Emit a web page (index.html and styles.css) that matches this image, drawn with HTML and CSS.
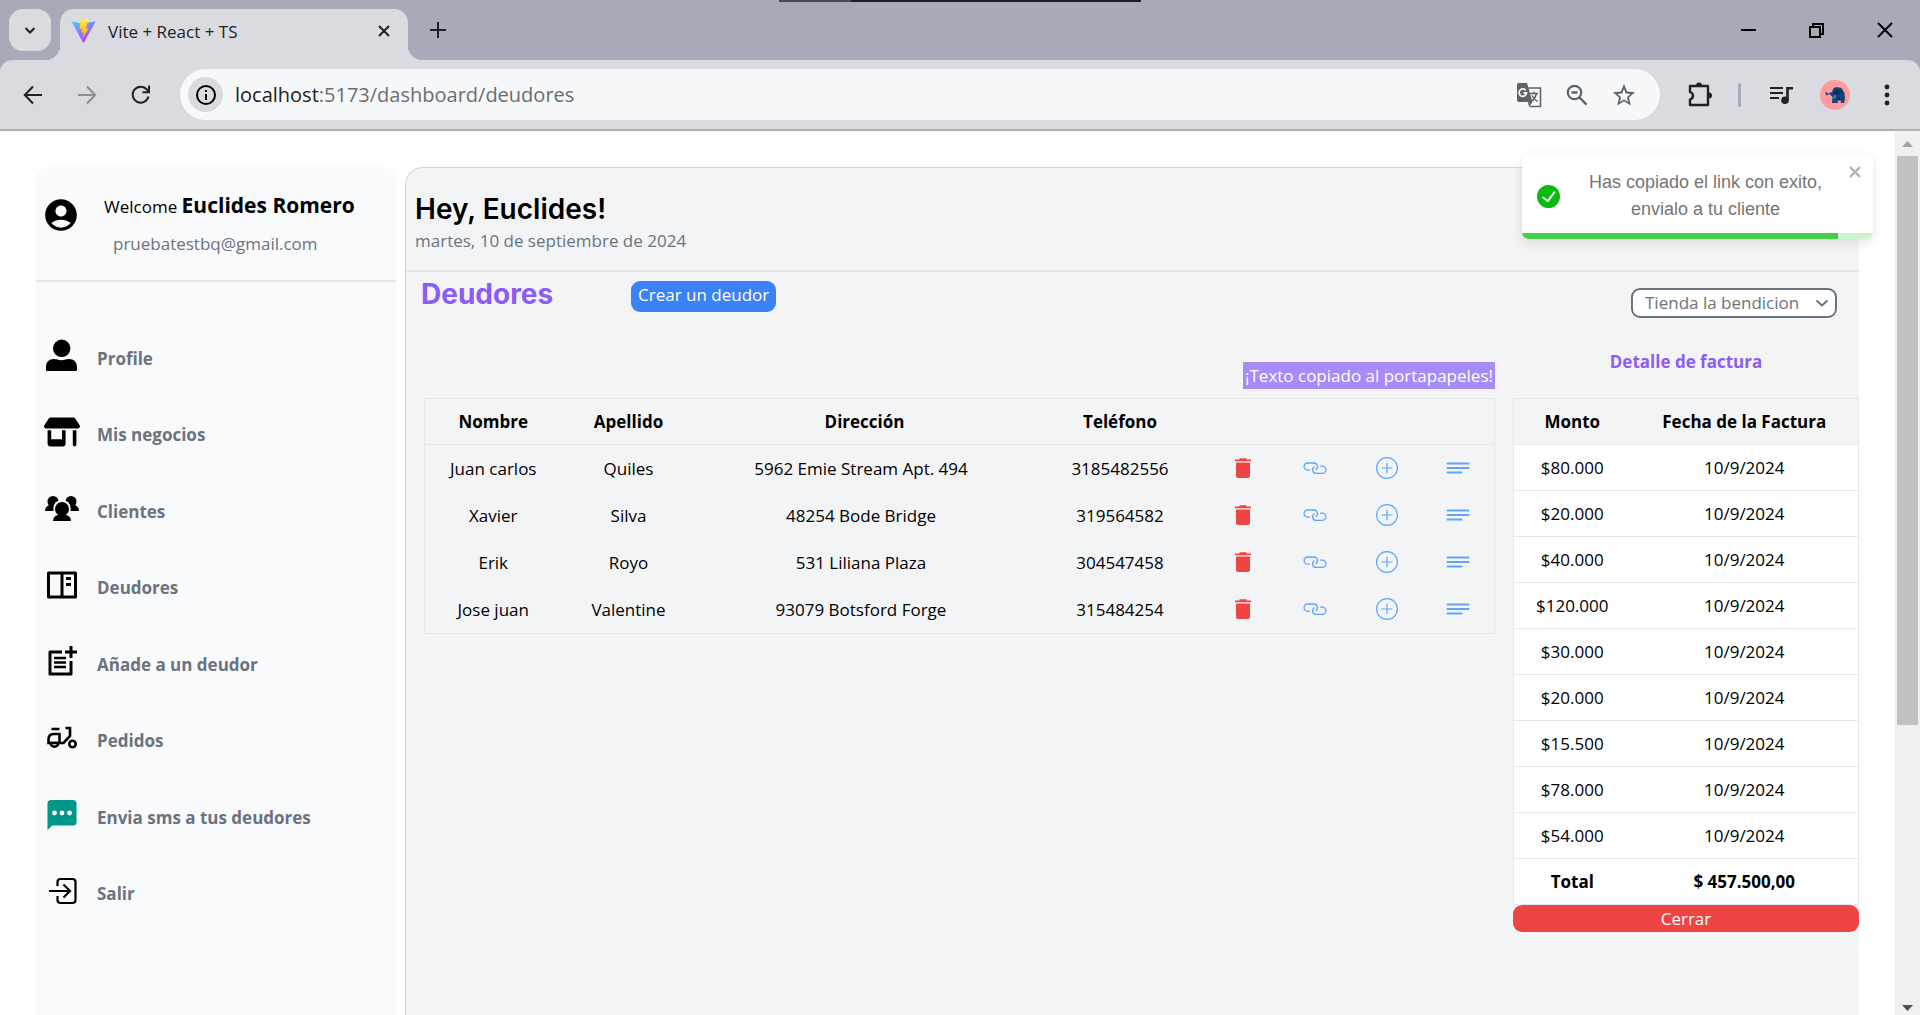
FILE: index.html
```html
<!DOCTYPE html>
<html lang="es">
<head>
<meta charset="utf-8">
<title>Vite + React + TS</title>
<link rel="stylesheet" href="styles.css">
</head>
<body>
<svg class="defs" aria-hidden="true">
  <symbol id="trash" viewBox="0 0 24 24"><path d="M4 3.500h16v1.700H4zM8.500 2.300h7v1.500h-7zM5 6.500h14V20a2 2 0 0 1-2 2H7a2 2 0 0 1-2-2z"/></symbol>
  <symbol id="link" viewBox="0 0 24 24"><path fill="none" stroke="currentColor" stroke-width="1.300" stroke-linecap="round" d="M6.500 14.200H4.700a3.600 3.600 0 0 1 0-7.200h6a3.600 3.600 0 0 1 2.300 6.500M17.500 10.200h1.800a3.600 3.600 0 0 1 0 7.200h-6a3.600 3.600 0 0 1-2.300-6.500"/></symbol>
  <symbol id="plus" viewBox="0 0 24 24"><path fill="none" stroke="currentColor" stroke-width="1.200" stroke-linecap="round" d="M12 1.600a10.400 10.400 0 1 0 0 20.800a10.400 10.400 0 1 0 0-20.800M12 7v10M7 12h10"/></symbol>
  <symbol id="lines" viewBox="0 0 24 24"><path fill="none" stroke="currentColor" stroke-width="2" stroke-linecap="round" d="M1.500 7.500h21M1.500 12h21M1.500 16.500h14"/></symbol>
</svg>

<header class="browser">
  <div class="tabs">
    <button class="tab-search" aria-label="Buscar pestañas"><svg width="14" height="14" viewBox="0 0 14 14"><path class="ln" d="M2.500 5L7 9.500 11.500 5"/></svg></button>
    <div class="tab">
      <svg class="tab-logo" width="25" height="25" viewBox="0 0 25 25">
        <defs>
          <linearGradient id="va" x1="0" y1="0" x2=".6" y2="1"><stop offset="0" stop-color="#41d1ff"/><stop offset="1" stop-color="#bd34fe"/></linearGradient>
          <linearGradient id="vb" x1="0" y1="0" x2="0" y2="1"><stop offset="0" stop-color="#ffea83"/><stop offset=".2" stop-color="#ffdd35"/><stop offset="1" stop-color="#ffa800"/></linearGradient>
        </defs>
        <path fill="url(#va)" d="M.5 3.500L12 5.500l12.500-2L13 24.500h-1z"/>
        <path fill="url(#vb)" d="M17.500.5L9.200 2 8.600 11l2.500-.4-.7 4.200 2-.5-1 6.500 6.200-10.400-2.600.4z"/>
      </svg>
      <span class="tab-title">Vite + React + TS</span>
      <button class="plain" aria-label="Cerrar pestaña"><svg width="14" height="14" viewBox="0 0 14 14"><path class="ln" d="M2 2l10 10M12 2L2 12"/></svg></button>
    </div>
    <button class="plain new-tab" aria-label="Nueva pestaña"><svg width="16" height="16" viewBox="0 0 16 16"><path class="ln" d="M8 0v16M0 8h16"/></svg></button>
    <span class="top-line"></span>
    <div class="window-buttons">
      <button class="plain" aria-label="Minimizar"><svg width="16" height="16" viewBox="0 0 16 16"><path class="thin" d="M0 8h15"/></svg></button>
      <button class="plain" aria-label="Restaurar"><svg width="16" height="16" viewBox="0 0 16 16"><path class="thin" d="M1 5h10v10H1zM4 5V2h10v10h-3"/></svg></button>
      <button class="plain" aria-label="Cerrar"><svg width="16" height="16" viewBox="0 0 16 16"><path class="thin" d="M1 1l14 14M15 1L1 15"/></svg></button>
    </div>
  </div>
  <div class="toolbar">
    <button class="plain" aria-label="Atrás"><svg width="20" height="20" viewBox="0 0 20 20"><path class="ln" d="M19 10H2M10 1.500L1.800 10l8.200 8.500"/></svg></button>
    <button class="plain dim" aria-label="Adelante"><svg width="20" height="20" viewBox="0 0 20 20"><path class="ln" d="M1 10h17M10 1.500l8.200 8.500-8.200 8.500"/></svg></button>
    <button class="plain" aria-label="Recargar"><svg width="20" height="20" viewBox="0 0 20 20"><path class="ln" d="M17.500 11.500A8 8 0 1 1 16 4.700L18 7"/><path class="ln" d="M18 .5V7.200h-6.500"/></svg></button>
    <div class="address">
      <span class="info"><svg width="22" height="22" viewBox="0 0 22 22"><circle class="ln" cx="11" cy="11" r="9"/><path class="ln" d="M11 10v6M11 6v2"/></svg></span>
      <span class="url">localhost<span class="url-rest">:5173/dashboard/deudores</span></span>
      <button class="plain grey" aria-label="Traducir"><svg width="26" height="26" viewBox="0 0 26 26"><path fill="none" stroke="currentColor" stroke-width="1.600" stroke-linejoin="round" d="M11 6h13.500v18.500H14"/><path fill="currentColor" d="M2.500 1h8.500l5.500 19H3a2 2 0 0 1-2-2V2.500A1.500 1.500 0 0 1 2.500 1zM12 20h4.500L13 25z"/><path fill="none" stroke="#f6f8fa" stroke-width="1.800" d="M9.700 8.300A3.700 3.700 0 1 0 10.500 11H7.500"/><path fill="none" stroke="currentColor" stroke-width="1.500" d="M14 11.500h8M18 9.500v2M20.500 11.500c-1 4-2.500 6-4.500 7.500M16 13.500c1.500 3 3 4.500 5.500 6"/></svg></button>
      <button class="plain grey" aria-label="Zoom"><svg width="22" height="22" viewBox="0 0 22 22"><circle cx="8.500" cy="8.500" r="6.700" fill="none" stroke="currentColor" stroke-width="2.200"/><path fill="none" stroke="currentColor" stroke-width="2.400" d="M13.500 13.500l7 7.200M5.500 8.500h6"/></svg></button>
      <button class="plain grey" aria-label="Marcador"><svg width="24" height="24" viewBox="0 0 24 24"><path fill="currentColor" d="M23 9.240l-7.910-.68L12 1 8.910 8.570 1 9.240l6 5.240L5.180 22.500 12 18.200l6.820 4.300L17 14.480zM12 16.400l-4.100 2.700 1.100-5-3.500-3 4.700-.5L12 6l1.800 4.600 4.700.5-3.500 3 1.100 5z"/></svg></button>
    </div>
    <button class="plain" aria-label="Extensiones"><svg width="26" height="26" viewBox="0 0 26 26"><path fill="none" stroke="currentColor" stroke-width="2.400" stroke-linejoin="round" d="M3 4h18v19H3v-5.500c4-1.500 4-6 0-7.500z"/><path fill="currentColor" d="M9 3.500a3 3 0 0 1 6 0zM22 10.500a3 3 0 0 1 0 6z"/></svg></button>
    <span class="divider"></span>
    <button class="plain" aria-label="Multimedia"><svg width="24" height="20" viewBox="0 0 24 20"><path class="ln" d="M1 3h13M1 8h13M1 13h9"/><path fill="none" stroke="currentColor" stroke-width="2.600" d="M18.500 15V3.300H24"/><circle cx="16" cy="15.300" r="3.800" fill="currentColor"/></svg></button>
    <button class="plain avatar" aria-label="Perfil"><svg width="30" height="30" viewBox="0 0 30 30"><circle cx="15" cy="15" r="15" fill="#ff9b9f"/><path fill="#15457e" d="M5.500 11.500l2.500 2 4-1.500 1.500-4 3-1 5 1 3 5 .5 6-1 4h-3l-.5-3h-3l.5 3h-6l.5-6-3-3-3.500 1.500z"/><path fill="#0a2c58" d="M13 13.500l4.500-4.500 4.500 2-3 4zM16 18l3.500-1 1 3.500H17z"/><path fill="#2f74b0" d="M12.500 18l2-3.500 2 1.500-1 3z"/></svg></button>
    <button class="plain" aria-label="Menú"><svg width="6" height="22" viewBox="0 0 6 22"><g fill="currentColor"><circle cx="3" cy="3" r="2.400"/><circle cx="3" cy="11" r="2.400"/><circle cx="3" cy="19" r="2.400"/></g></svg></button>
  </div>
</header>

<div class="viewport">
  <div class="page">
    <aside class="sidebar">
      <div class="user">
        <svg width="38" height="38" viewBox="0 0 24 24"><path d="M12 2C6.480 2 2 6.480 2 12s4.480 10 10 10 10-4.480 10-10S17.520 2 12 2zm0 4c1.930 0 3.500 1.570 3.500 3.500S13.930 13 12 13s-3.500-1.570-3.500-3.500S10.070 6 12 6zm0 14c-2.030 0-4.430-.82-6.140-2.880a9.947 9.947 0 0 1 12.280 0C16.430 19.180 14.030 20 12 20z"/></svg>
        <div class="user-text">
          <p>Welcome <strong>Euclides Romero</strong></p>
          <p class="email">pruebatestbq@gmail.com</p>
        </div>
      </div>
      <nav class="nav">
        <a href="#"><svg viewBox="0 0 36 36"><circle cx="17.700" cy="11.300" r="8.700"/><path d="M2 33v-3c0-5 3-8 8-8 3 0 4 1.200 7.500 1.200S22 22 25 22c5 0 8 3 8 8v3q0 1-1 1H3q-1 0-1-1z"/></svg>Profile</a>
        <a href="#"><svg viewBox="0 -64 640 640"><path d="M36.800 192H603.200c20.300 0 36.800-16.500 36.800-36.800c0-7.300-2.200-14.400-6.200-20.400L558.200 21.400C549.300 8 534.400 0 518.300 0H121.700c-16 0-31 8-39.900 21.400L6.200 134.700c-4 6.100-6.200 13.200-6.200 20.400C0 175.500 16.500 192 36.800 192zM64 224V464c0 26.500 21.500 48 48 48H336c26.500 0 48-21.500 48-48V224H320V384H128V224zM512 224V480c0 17.700 14.300 32 32 32s32-14.300 32-32V224z"/></svg>Mis negocios</a>
        <a href="#"><svg viewBox="0 0 36 36"><circle cx="9" cy="11.500" r="5.500"/><circle cx="27" cy="11.500" r="5.500"/><path d="M1 21c0-3 1.500-4.500 4-6h26c2.500 1.500 4 3 4 6z"/><circle cx="18" cy="18.500" r="8.700" fill="#f9fafb"/><path fill="#f9fafb" d="M9.500 20.500h17l1 2h-19z"/><circle cx="18" cy="19" r="7"/><path d="M9 31c0-3 1.500-5 4.500-6h9c3 1 4.500 3 4.500 6z"/></svg>Clientes</a>
        <a href="#"><svg viewBox="0 0 36 36"><path fill="none" stroke="#000" stroke-width="3" stroke-linejoin="round" d="M4.500 6h27v24h-27zM18 6v24"/><path d="M22 10h5v3h-5zM22 16h5v3h-5z"/></svg>Deudores</a>
        <a href="#"><svg viewBox="0 0 36 36"><path fill="none" stroke="#000" stroke-width="3" stroke-linejoin="round" d="M18 9H6v22h21V18"/><path fill="none" stroke="#000" stroke-width="3" d="M27 3v12M21 9h12"/><path fill="none" stroke="#000" stroke-width="2.400" d="M10 15h12M10 19.500h12M10 24h12"/></svg>Añade a un deudor</a>
        <a href="#"><svg viewBox="0 0 36 36"><path fill="none" stroke="#000" stroke-width="2.600" d="M7.500 9h8M15.500 13.500v9M21.500 8h4.500v8l-6.500 7H4.500v-3c0-4 2-6 5-6h7"/><g fill="#f9fafb" stroke="#000" stroke-width="2.600"><path d="M6.700 23a3.800 3.800 0 0 0 7.600 0z"/><circle cx="28.500" cy="24" r="3.200"/></g></svg>Pedidos</a>
        <a href="#"><svg viewBox="0 0 36 36"><path fill="#009688" d="M7 4h22a3.500 3.500 0 0 1 3.500 3.500v18.500a3.500 3.500 0 0 1-3.500 3.500H8L3.500 34V7.500A3.500 3.500 0 0 1 7 4z"/><g fill="#fff"><circle cx="10.500" cy="17" r="2.400"/><circle cx="18" cy="17" r="2.400"/><circle cx="25.500" cy="17" r="2.400"/></g></svg>Envia sms a tus deudores</a>
        <a href="#"><svg viewBox="0 0 36 36"><path fill="none" stroke="#000" stroke-width="2.200" d="M13.500 13V9a3 3 0 0 1 3-3h12a3 3 0 0 1 3 3v18a3 3 0 0 1-3 3h-12a3 3 0 0 1-3-3v-4M5 18h21M19.500 11.500L26 18l-6.500 6.500"/></svg>Salir</a>
      </nav>
    </aside>

    <main class="main">
      <div class="greeting">
        <h1>Hey, Euclides!</h1>
        <p>martes, 10 de septiembre de 2024</p>
      </div>
      <div class="heading">
        <h2>Deudores</h2>
        <button class="create">Crear un deudor</button>
        <label class="shop">
          <select aria-label="Negocio"><option>Tienda la bendicion</option></select>
          <svg width="14" height="14" viewBox="0 0 14 14"><path fill="none" stroke="#6b7280" stroke-width="2" d="M1.500 4.500L7 9.500l5.500-5"/></svg>
        </label>
      </div>
      <div class="panels">
        <section class="debtors">
          <p class="copied">¡Texto copiado al portapapeles!</p>
          <table>
            <colgroup><col class="c-name"><col class="c-last"><col><col class="c-phone"><col class="c-act"><col class="c-act"><col class="c-act"><col class="c-act"></colgroup>
            <thead><tr><th>Nombre</th><th>Apellido</th><th>Dirección</th><th>Teléfono</th><th></th><th></th><th></th><th></th></tr></thead>
            <tbody>
              <tr><td>Juan carlos</td><td>Quiles</td><td class="street">5962 Emie Stream Apt. 494</td><td>3185482556</td><td><button class="act red" aria-label="Eliminar"><svg><use href="#trash"/></svg></button></td><td><button class="act" aria-label="Copiar link"><svg><use href="#link"/></svg></button></td><td><button class="act" aria-label="Añadir"><svg><use href="#plus"/></svg></button></td><td><button class="act" aria-label="Detalle"><svg><use href="#lines"/></svg></button></td></tr>
              <tr><td>Xavier</td><td>Silva</td><td class="street">48254 Bode Bridge</td><td>319564582</td><td><button class="act red" aria-label="Eliminar"><svg><use href="#trash"/></svg></button></td><td><button class="act" aria-label="Copiar link"><svg><use href="#link"/></svg></button></td><td><button class="act" aria-label="Añadir"><svg><use href="#plus"/></svg></button></td><td><button class="act" aria-label="Detalle"><svg><use href="#lines"/></svg></button></td></tr>
              <tr><td>Erik</td><td>Royo</td><td class="street">531 Liliana Plaza</td><td>304547458</td><td><button class="act red" aria-label="Eliminar"><svg><use href="#trash"/></svg></button></td><td><button class="act" aria-label="Copiar link"><svg><use href="#link"/></svg></button></td><td><button class="act" aria-label="Añadir"><svg><use href="#plus"/></svg></button></td><td><button class="act" aria-label="Detalle"><svg><use href="#lines"/></svg></button></td></tr>
              <tr><td>Jose juan</td><td>Valentine</td><td class="street">93079 Botsford Forge</td><td>315484254</td><td><button class="act red" aria-label="Eliminar"><svg><use href="#trash"/></svg></button></td><td><button class="act" aria-label="Copiar link"><svg><use href="#link"/></svg></button></td><td><button class="act" aria-label="Añadir"><svg><use href="#plus"/></svg></button></td><td><button class="act" aria-label="Detalle"><svg><use href="#lines"/></svg></button></td></tr>
            </tbody>
          </table>
        </section>
        <section class="invoice">
          <h3>Detalle de factura</h3>
          <table>
            <colgroup><col class="c-amount"><col></colgroup>
            <thead><tr><th>Monto</th><th>Fecha de la Factura</th></tr></thead>
            <tbody>
              <tr><td>$80.000</td><td>10/9/2024</td></tr>
              <tr><td>$20.000</td><td>10/9/2024</td></tr>
              <tr><td>$40.000</td><td>10/9/2024</td></tr>
              <tr><td>$120.000</td><td>10/9/2024</td></tr>
              <tr><td>$30.000</td><td>10/9/2024</td></tr>
              <tr><td>$20.000</td><td>10/9/2024</td></tr>
              <tr><td>$15.500</td><td>10/9/2024</td></tr>
              <tr><td>$78.000</td><td>10/9/2024</td></tr>
              <tr><td>$54.000</td><td>10/9/2024</td></tr>
            </tbody>
            <tfoot><tr><th>Total</th><th>$ 457.500,00</th></tr></tfoot>
          </table>
          <button class="close">Cerrar</button>
        </section>
      </div>
    </main>
  </div>

  <div class="scrollbar">
    <svg width="11" height="6" viewBox="0 0 11 6"><path fill="#a3a3a3" d="M0 6L5.500 0 11 6z"/></svg>
    <span class="thumb"></span>
    <svg width="11" height="6" viewBox="0 0 11 6"><path fill="#505050" d="M0 0h11L5.500 6z"/></svg>
  </div>

  <div class="toast" role="alert">
    <svg class="toast-check" width="23" height="23" viewBox="0 0 24 24"><path fill="#07bc0c" d="M12 0a12 12 0 1 0 12 12A12.014 12.014 0 0 0 12 0zm6.927 8.200l-6.845 9.289a1.011 1.011 0 0 1-1.430.188l-4.888-3.908a1 1 0 1 1 1.250-1.562l4.076 3.261 6.227-8.451a1 1 0 1 1 1.610 1.183z"/></svg>
    <p>Has copiado el link con exito, envialo a tu cliente</p>
    <button class="toast-close" aria-label="close"><svg width="12" height="12" viewBox="0 0 12 12"><path fill="none" stroke="#b2b2b2" stroke-width="2.400" d="M1 1l10 10M11 1L1 11"/></svg></button>
    <span class="toast-bar"></span>
  </div>
</div>
</body>
</html>
```
FILE: styles.css
```css
* { box-sizing: border-box; margin: 0; padding: 0; }
body {
  min-height: 100vh;
  display: flex;
  flex-direction: column;
  background: #fff;
  color: #000;
  font: 17px/27px "Open Sans", "Noto Sans", sans-serif;
}
button, select { font: inherit; border: 0; background: none; color: inherit; }
svg { display: block; flex: none; }
.defs { position: absolute; width: 0; height: 0; }
.ln { fill: none; stroke: currentColor; stroke-width: 2; }
.thin { fill: none; stroke: #000; stroke-width: 2; }
.plain { display: flex; align-items: center; justify-content: center; color: #202124; }
.plain.dim { color: #8b8d93; }
.plain.grey { color: #5f6368; }

/* Browser frame */
.browser { background: #a7abb8; }
.tabs { position: relative; height: 60px; display: flex; align-items: center; padding: 0 16px 0 9px; }
.tab-search {
  width: 42px; height: 42px; border-radius: 14px; background: #dadbe0; color: #202124;
  display: flex; align-items: center; justify-content: center;
}
.tab {
  position: relative; align-self: flex-end; width: 348px; height: 51px; margin-left: 9px; padding: 0 17px 8px 11px;
  display: flex; align-items: center; gap: 12px;
  border-radius: 14px 14px 0 0; background: #dadbe0; color: #202124;
}
.tab::before, .tab::after { content: ""; position: absolute; bottom: 0; width: 14px; height: 14px; }
.tab::before { left: -14px; background: radial-gradient(circle at 0 0, transparent 14px, #dadbe0 14px); }
.tab::after { right: -14px; background: radial-gradient(circle at 100% 0, transparent 14px, #dadbe0 14px); }
.tab-title { flex: 1; font-size: 17px; padding-top: 2px; }
.new-tab { margin-left: 22px; }
.top-line { position: absolute; left: calc(50% - 181px); top: 0; width: 362px; height: 2px; background: linear-gradient(90deg, #4c4a4c 20%, #1f1f1f 20%); }
.window-buttons { margin-left: auto; display: flex; gap: 52px; padding-right: 11px; }
.toolbar {
  display: flex; align-items: center; height: 71px; padding: 0 30px 0 23px;
  border-bottom: 2px solid #adb0b5; border-radius: 12px 12px 0 0; background: #dadbe0;
}
.toolbar > .plain + .plain { margin-left: 34px; }
.toolbar > .plain + .avatar { margin-left: 27px; }
.address {
  flex: 1; display: flex; align-items: center; height: 51px; margin: 0 27px 0 29px; padding: 0 24px 0 8px;
  border-radius: 26px; background: #f6f8fa;
}
.info { width: 35px; height: 35px; border-radius: 50%; background: #dadbe0; display: flex; align-items: center; justify-content: center; }
.url { flex: 1; margin-left: 12px; font-size: 20px; color: #202124; }
.url-rest { color: #6a6d71; }
.address .plain { margin-left: 24px; }
.divider { width: 3px; height: 24px; margin: 0 28px 0 25px; border-radius: 2px; background: #a7abb8; }

/* Page */
.viewport { position: relative; flex: 1; display: flex; }
.page { flex: 1; display: flex; gap: 9px; padding: 36px 36px 0; }
.sidebar { width: 360px; border-radius: 14px 14px 0 0; background: #f9fafb; }
.user { display: flex; align-items: flex-start; height: 115px; padding: 29px 0 0 6px; border-bottom: 2px solid #e5e7eb; }
.user-text { margin: -4px 0 0 24px; }
.user strong { font-size: 21px; font-weight: 700; }
.email { margin: 10px 0 0 9px; color: #6b7280; }
.nav { display: grid; grid-auto-rows: 1fr; height: 612px; margin-top: 38px; padding-left: 8px; }
.nav a { display: flex; align-items: center; gap: 17px; color: #6b7280; font-weight: 700; text-decoration: none; }
.nav svg { width: 36px; height: 36px; margin-bottom: 6px; fill: #000; }
.main { flex: 1; border: solid #d1d5db; border-width: 1px 0 0 1px; border-radius: 18px 0 0 0; background: #f3f4f6; }
.greeting { height: 104px; padding: 23px 9px 0; border-bottom: 2px solid #e5e7eb; }
h1, h2 { font-family: Inter, sans-serif; font-size: 28px; line-height: 36px; font-weight: 600; }
.greeting p { color: #6b7280; line-height: 27px; }
.heading { display: flex; align-items: flex-start; height: 76px; padding: 4px 22px 0 15px; }
h2 { width: 210px; font-weight: 700; color: #8b5cf6; }
.create { height: 31px; margin-top: 5px; padding: 0 7px 4px; border-radius: 9px; background: #3b82f6; color: #fff; }
.shop { position: relative; width: 206px; margin: 12px 0 0 auto; }
.shop select { appearance: none; display: block; width: 100%; height: 30px; padding: 0 12px; border: 2px solid #6b7280; border-radius: 9px; background: #fff; color: #6b7280; line-height: 24px; }
.shop svg { position: absolute; right: 8px; top: 8px; pointer-events: none; }
.panels { display: flex; align-items: flex-start; gap: 18px; padding-left: 18px; }
.debtors { flex: 1; padding-top: 14px; }
.copied { width: fit-content; margin: 0 0 9px auto; padding: 0 2px; background: #a78bfa; color: #fff; }
.invoice { width: 346px; }
h3 { height: 50px; font-size: 17px; line-height: 27px; font-weight: 700; text-align: center; color: #8b5cf6; }
table { width: 100%; table-layout: fixed; border-collapse: collapse; border: 1px solid #e5e7eb; text-align: center; }
th { height: 46px; font-weight: 700; }
thead tr { border-bottom: 1px solid #e5e7eb; }
.debtors td { height: 47px; }
.debtors tr:last-child td { height: 48px; }
.debtors .street { padding-right: 7px; }
.invoice td { height: 46px; }
.invoice tbody tr, .invoice tfoot tr { background: #fff; border-bottom: 1px solid #e5e7eb; }
.c-name { width: 137px; }
.c-last { width: 134px; }
.c-phone { width: 173px; }
.c-act { width: 72px; }
.c-amount { width: 117px; }
.act { display: block; margin: 0 auto; color: #60a5fa; fill: currentColor; }
.act.red { color: #ef4444; }
.act svg { width: 24px; height: 24px; }
.close { display: block; width: 100%; height: 27px; border-radius: 9px; background: #ef4444; color: #fff; }

/* Scrollbar */
.scrollbar { width: 25px; display: flex; flex-direction: column; align-items: center; padding: 10px 0 4px; background: #f0f0f0; }
.thumb { width: 21px; height: 569px; margin: 9px 0 auto; background: #c1c1c1; }

/* Toast */
.toast {
  position: absolute; top: 23px; right: 47px; width: 351px; height: 85px; padding: 15px 46px 0 15px;
  display: flex; align-items: flex-start; border-radius: 7px; overflow: hidden;
  background: #fff; color: #757575; box-shadow: 0 4px 12px rgba(0, 0, 0, .1);
  font: 18px/27px "Liberation Sans", sans-serif; text-align: center;
}
.toast-check { margin-top: 16px; }
.toast p { flex: 1; margin-left: 24px; }
.toast-close { position: absolute; top: 12px; right: 12px; }
.toast-bar { position: absolute; left: 0; right: 0; bottom: 0; height: 6px; background: linear-gradient(90deg, #45cd48 90%, #cdf2ce 90%); }
```
